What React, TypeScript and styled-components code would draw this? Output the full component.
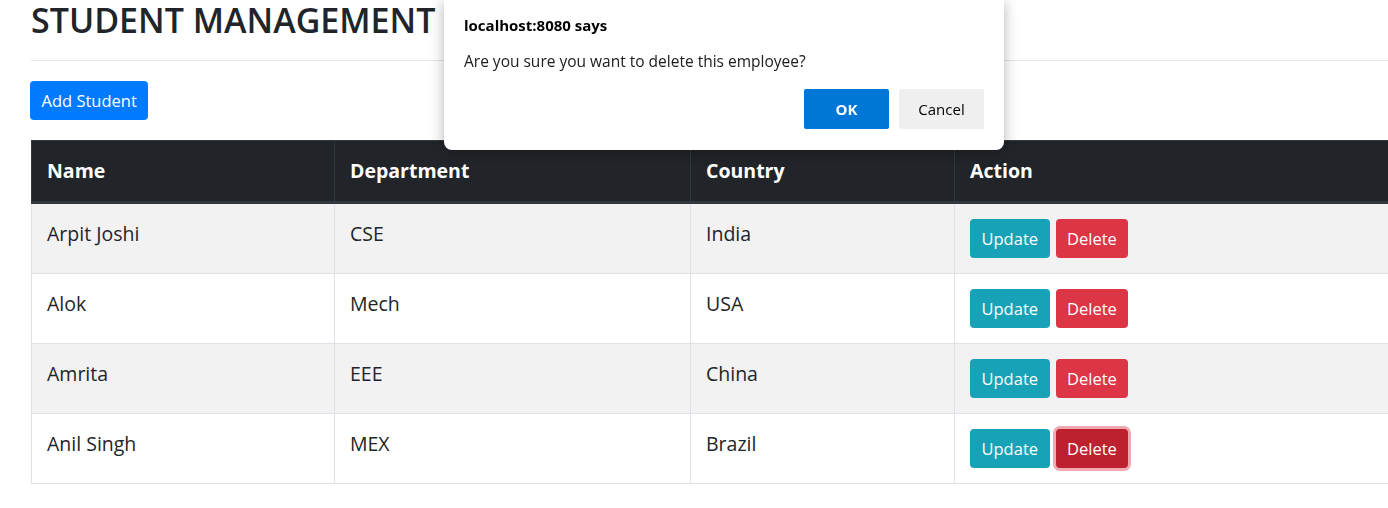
import React from 'react';
import styled, {createGlobalStyle} from "styled-components";

const GlobalStyle = createGlobalStyle`
    body {
        margin: 0;
        overflow: hidden;
        background: #fff;
        color: #212529;
        font-family: "Open Sans", "Noto Sans", sans-serif;
    }
`

const Page = styled.div`
    padding: 0 0 0 31px;
    width: 1500px;
`

const Heading = styled.h2`
    margin: 0;
    font-size: 34px;
    line-height: 40px;
    font-weight: 600;
    letter-spacing: 0;
`

const Rule = styled.hr`
    margin: 20px 0;
    border: 0;
    border-top: 1px solid rgba(0, 0, 0, 0.1);
`

const Button = styled.button<{ variant: 'primary' | 'info' | 'danger'; active?: boolean }>`
    font-family: inherit;
    font-size: 16.5px;
    height: 39px;
    padding: 0 10.5px;
    border: 1px solid transparent;
    border-radius: 4px;
    color: #fff;
    cursor: pointer;
    background-color: ${p => p.variant === 'primary' ? '#007bff' : p.variant === 'info' ? '#17a2b8' : (p.active ? '#bd2130' : '#dc3545')};
    box-shadow: ${p => p.active ? '0 0 0 3px rgba(225, 83, 97, 0.5)' : 'none'};
`

const AddButton = styled(Button)`
    margin-left: -1px;
    margin-bottom: 20px;
`

const Table = styled.table`
    width: 1500px;
    table-layout: fixed;
    border-collapse: collapse;
    border: 1px solid #dee2e6;
    font-size: 19.5px;
    line-height: 30px;

    th, td {
        padding: 15px;
        text-align: left;
        vertical-align: top;
    }

    th {
        background: #212529;
        color: #fff;
        font-weight: 700;
        border: 1px solid #32383e;
        border-bottom-width: 3px;
    }

    td {
        border: 1px solid #dee2e6;
    }

    tbody tr:nth-child(odd) {
        background: #f2f2f2;
    }
`

const Actions = styled.div`
    display: flex;
    gap: 6px;
`

const Dialog = styled.div`
    position: fixed;
    top: 0;
    left: 444px;
    width: 560px;
    height: 150px;
    box-sizing: border-box;
    padding: 14px 20px 20px;
    background: #fff;
    border-radius: 0 0 8px 8px;
    box-shadow: 0 2px 14px rgba(0, 0, 0, 0.3);
    font-family: "Open Sans", "Noto Sans", sans-serif;
    color: #000;
`

const DialogTitle = styled.div`
    font-size: 15px;
    font-weight: 700;
    line-height: 22px;
`

const DialogText = styled.div`
    margin-top: 14px;
    font-size: 15.5px;
    line-height: 22px;
    color: #202020;
`

const DialogButtons = styled.div`
    display: flex;
    justify-content: flex-end;
    gap: 10px;
    margin-top: 17px;
`

const DialogButton = styled.button<{ primary?: boolean }>`
    width: 85px;
    height: 40px;
    border: 0;
    border-radius: 2px;
    font-family: inherit;
    font-size: 15px;
    font-weight: ${p => p.primary ? 700 : 400};
    color: ${p => p.primary ? '#fff' : '#000'};
    background: ${p => p.primary ? '#0077d6' : '#efefef'};
`

const students = [
    {name: 'Arpit Joshi', department: 'CSE', country: 'India'},
    {name: 'Alok', department: 'Mech', country: 'USA'},
    {name: 'Amrita', department: 'EEE', country: 'China'},
    {name: 'Anil Singh', department: 'MEX', country: 'Brazil'},
]

function App() {
    return (
        <>
            <GlobalStyle/>
            <Page>
                <Heading>STUDENT MANAGEMENT</Heading>
                <Rule/>
                <AddButton variant="primary">Add Student</AddButton>
                <Table>
                    <colgroup>
                        <col style={{width: 303}}/>
                        <col style={{width: 356}}/>
                        <col style={{width: 264}}/>
                        <col/>
                    </colgroup>
                    <thead>
                    <tr>
                        <th>Name</th>
                        <th>Department</th>
                        <th>Country</th>
                        <th>Action</th>
                    </tr>
                    </thead>
                    <tbody>
                    {students.map((s, i) => (
                        <tr key={s.name}>
                            <td>{s.name}</td>
                            <td>{s.department}</td>
                            <td>{s.country}</td>
                            <td>
                                <Actions>
                                    <Button variant="info">Update</Button>
                                    <Button variant="danger" active={i === students.length - 1}>Delete</Button>
                                </Actions>
                            </td>
                        </tr>
                    ))}
                    </tbody>
                </Table>
            </Page>
            <Dialog>
                <DialogTitle>localhost:8080 says</DialogTitle>
                <DialogText>Are you sure you want to delete this employee?</DialogText>
                <DialogButtons>
                    <DialogButton primary>OK</DialogButton>
                    <DialogButton>Cancel</DialogButton>
                </DialogButtons>
            </Dialog>
        </>
    );
}

export default App;
